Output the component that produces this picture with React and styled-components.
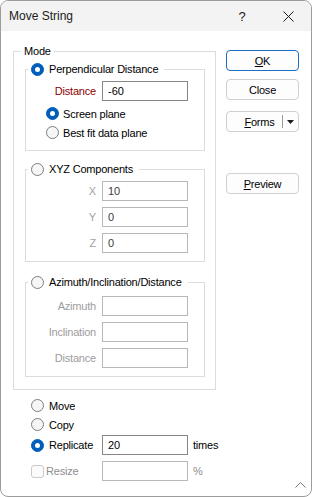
import React from 'react'
import styled, { createGlobalStyle } from 'styled-components'

const GlobalStyle = createGlobalStyle`
  html, body {
    margin: 0;
    padding: 0;
    background: #ffffff;
  }
  body {
    font-family: "Liberation Sans", Arial, sans-serif;
    font-size: 11px;
    color: #000;
  }
`

const Window = styled.div`
  position: relative;
  width: 312px;
  height: 497px;
  box-sizing: border-box;
  border: 1px solid #9c9c9c;
  border-radius: 8px;
  overflow: hidden;
  background: #ffffff;
  display: flex;
  flex-direction: column;
`

const TitleBar = styled.div`
  height: 30px;
  flex: none;
  display: flex;
  align-items: center;
  background: #f3f3f3;
  padding-left: 8px;
`

const Title = styled.div`
  font-size: 12px;
  color: #1b1b1b;
  flex: 1;
`

const CaptionButton = styled.div`
  width: 46px;
  height: 30px;
  display: flex;
  align-items: center;
  justify-content: center;
  font-size: 13px;
  color: #1b1b1b;
`

const Body = styled.div`
  display: flex;
  gap: 10px;
  padding: 13px 0 0 12px;
`

const LeftColumn = styled.div`
  width: 203px;
  display: flex;
  flex-direction: column;
`

const GroupBox = styled.fieldset`
  margin: ${(p) => p.$mt || 0}px 0 0 0;
  padding: 0;
  min-width: 0;
  border: 1px solid #dcdcdc;
  border-radius: 0;
`

const Legend = styled.legend`
  margin-left: ${(p) => p.$ml || 0}px;
  padding: 0 ${(p) => p.$pr || 3}px 0 3px;
  line-height: 14px;
  height: 14px;
  letter-spacing: -0.2px;
`

const GroupBody = styled.div`
  padding: ${(p) => p.$pad};
  display: flex;
  flex-direction: column;
`

const FieldRow = styled.div`
  display: grid;
  grid-template-columns: 70px 86px;
  column-gap: 6px;
  align-items: center;
  height: 20px;
  margin-top: ${(p) => p.$mt || 0}px;
`

const FieldLabel = styled.span`
  text-align: right;
  letter-spacing: -0.2px;
  color: ${(p) => p.$color || '#000'};
`

const TextBox = styled.div`
  height: 20px;
  box-sizing: border-box;
  margin-top: ${(p) => p.$mt || 0}px;
  border: 1px solid ${(p) => (p.$disabled ? '#b8b8b8' : '#868686')};
  background: #fff;
  padding-left: 5px;
  display: flex;
  align-items: center;
  color: ${(p) => (p.$disabled ? '#3c3c3c' : '#000')};
`

const OptionList = styled.div`
  display: flex;
  flex-direction: column;
  margin-top: ${(p) => p.$mt || 0}px;
  padding-left: ${(p) => p.$pl || 0}px;
`

const OptionRow = styled.div`
  display: flex;
  align-items: center;
  gap: ${(p) => p.$gap || 5}px;
  height: ${(p) => p.$h || 19}px;
  margin-top: ${(p) => p.$mt || 0}px;
  letter-spacing: -0.2px;
  color: ${(p) => (p.$disabled ? '#8e8e8e' : '#000')};
`

const RadioCircle = styled.span`
  width: 13px;
  height: 13px;
  box-sizing: border-box;
  border-radius: 50%;
  flex: none;
  position: relative;
  background: ${(p) => (p.$checked ? '#005fb8' : '#f6f6f6')};
  border: 1px solid ${(p) => (p.$checked ? '#005fb8' : '#7e7e7e')};

  &::after {
    content: '';
    display: ${(p) => (p.$checked ? 'block' : 'none')};
    position: absolute;
    left: 3px;
    top: 3px;
    width: 5px;
    height: 5px;
    border-radius: 50%;
    background: #fff;
  }
`

const CheckBox = styled.span`
  width: 13px;
  height: 13px;
  box-sizing: border-box;
  border-radius: 3px;
  flex: none;
  border: 1px solid #c9c9c9;
  background: #fbfbfb;
`

const BottomGrid = styled.div`
  display: grid;
  grid-template-columns: 65px 86px auto;
  column-gap: 6px;
  align-items: center;
  padding-left: 18px;
  margin-top: 6px;
`

const Suffix = styled.span`
  margin-left: -1px;
  margin-top: ${(p) => p.$mt || 0}px;
  letter-spacing: -0.2px;
  color: ${(p) => (p.$disabled ? '#8e8e8e' : '#000')};
`

const RightColumn = styled.div`
  width: 73px;
  display: flex;
  flex-direction: column;
  padding-top: 6px;
`

const Button = styled.div`
  height: 21px;
  box-sizing: border-box;
  margin-top: ${(p) => p.$mt || 0}px;
  border: 1px solid ${(p) => (p.$primary ? '#1a6fc4' : '#d0d0d0')};
  border-radius: 4px;
  background: #fdfdfd;
  display: flex;
  align-items: center;
  justify-content: center;
  letter-spacing: -0.2px;

  u {
    text-decoration: underline;
    text-underline-offset: 1px;
  }
`

const SplitText = styled.span`
  flex: 1;
  text-align: center;
  padding-left: 10px;
`

const SplitDivider = styled.span`
  width: 1px;
  height: 13px;
  background: #9a9a9a;
`

const SplitArrow = styled.span`
  width: 15px;
  display: flex;
  justify-content: center;
`

const SizeGrip = styled.svg`
  position: absolute;
  right: 5px;
  bottom: 8px;
`

const Radio = ({ checked, children, gap, h, mt }) => (
  <OptionRow $gap={gap} $h={h} $mt={mt}>
    <RadioCircle $checked={checked} />
    <span>{children}</span>
  </OptionRow>
)

const App = () => {
  return (
    <>
      <GlobalStyle />
      <Window>
        <TitleBar>
          <Title>Move String</Title>
          <CaptionButton>?</CaptionButton>
          <CaptionButton>
            <svg width="11" height="11" viewBox="0 0 11 11">
              <path d="M0.5 0.5 L10.5 10.5 M10.5 0.5 L0.5 10.5" stroke="#1b1b1b" strokeWidth="1" fill="none" />
            </svg>
          </CaptionButton>
        </TitleBar>

        <Body>
          <LeftColumn>
            <GroupBox>
              <Legend $ml={7}>Mode</Legend>
              <GroupBody $pad="4px 10px 12px 11px">
                <GroupBox>
                  <Legend $ml={2} $pr={6}>
                    <Radio checked h={14}>Perpendicular Distance</Radio>
                  </Legend>
                  <GroupBody $pad="5px 0 8px 0">
                    <FieldRow>
                      <FieldLabel $color="#8b0000">Distance</FieldLabel>
                      <TextBox>-60</TextBox>
                    </FieldRow>
                    <OptionList $mt={3} $pl={20}>
                      <Radio checked gap={4}>Screen plane</Radio>
                      <Radio gap={4}>Best fit data plane</Radio>
                    </OptionList>
                  </GroupBody>
                </GroupBox>

                <GroupBox $mt={11}>
                  <Legend $ml={2} $pr={6}>
                    <Radio h={14}>XYZ Components</Radio>
                  </Legend>
                  <GroupBody $pad="5px 0 8px 0">
                    <FieldRow>
                      <FieldLabel $color="#a3a3a3">X</FieldLabel>
                      <TextBox $disabled>10</TextBox>
                    </FieldRow>
                    <FieldRow $mt={6}>
                      <FieldLabel $color="#a3a3a3">Y</FieldLabel>
                      <TextBox $disabled>0</TextBox>
                    </FieldRow>
                    <FieldRow $mt={6}>
                      <FieldLabel $color="#a3a3a3">Z</FieldLabel>
                      <TextBox $disabled>0</TextBox>
                    </FieldRow>
                  </GroupBody>
                </GroupBox>

                <GroupBox $mt={13}>
                  <Legend $ml={2} $pr={6}>
                    <Radio h={14}>Azimuth/Inclination/Distance</Radio>
                  </Legend>
                  <GroupBody $pad="7px 0 8px 0">
                    <FieldRow>
                      <FieldLabel $color="#9d9d9d">Azimuth</FieldLabel>
                      <TextBox $disabled />
                    </FieldRow>
                    <FieldRow $mt={6}>
                      <FieldLabel $color="#9d9d9d">Inclination</FieldLabel>
                      <TextBox $disabled />
                    </FieldRow>
                    <FieldRow $mt={6}>
                      <FieldLabel $color="#9d9d9d">Distance</FieldLabel>
                      <TextBox $disabled />
                    </FieldRow>
                  </GroupBody>
                </GroupBox>
              </GroupBody>
            </GroupBox>

            <BottomGrid>
              <Radio>Move</Radio>
              <span />
              <span />
              <Radio>Copy</Radio>
              <span />
              <span />
              <Radio checked mt={1}>Replicate</Radio>
              <TextBox $mt={1}>20</TextBox>
              <Suffix $mt={1}>times</Suffix>
              <OptionRow $disabled $gap={2} $mt={6}>
                <CheckBox />
                <span>Resize</span>
              </OptionRow>
              <TextBox $disabled $mt={6} />
              <Suffix $disabled $mt={6}>%</Suffix>
            </BottomGrid>
          </LeftColumn>

          <RightColumn>
            <Button $primary>
              <span><u>O</u>K</span>
            </Button>
            <Button $mt={8}>Close</Button>
            <Button $mt={11}>
              <SplitText><u>F</u>orms</SplitText>
              <SplitDivider />
              <SplitArrow>
                <svg width="7" height="4" viewBox="0 0 7 4">
                  <path d="M0 0 L7 0 L3.5 4 Z" fill="#1b1b1b" />
                </svg>
              </SplitArrow>
            </Button>
            <Button $mt={41}>
              <span><u>P</u>review</span>
            </Button>
          </RightColumn>
        </Body>

        <SizeGrip width="11" height="6" viewBox="0 0 11 6">
          <path d="M0.5 5.5 L5.5 0.5 L10.5 5.5" stroke="#7a7a7a" strokeWidth="1" fill="none" />
        </SizeGrip>
      </Window>
    </>
  )
}

export default App
